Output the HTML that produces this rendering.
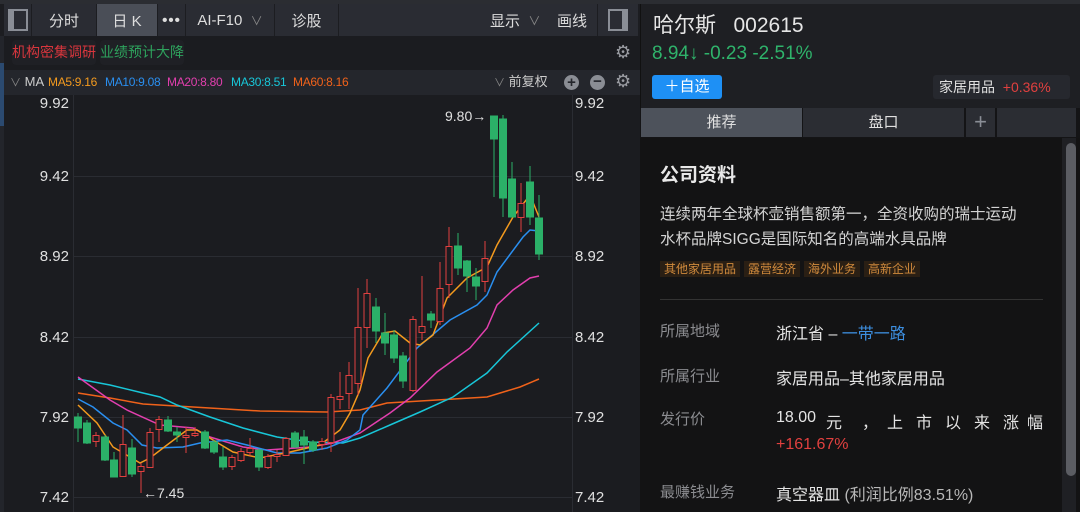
<!DOCTYPE html>
<html><head><meta charset="utf-8"><style>
*{margin:0;padding:0;box-sizing:border-box}
body{width:1080px;height:512px;background:#1b1c20;font-family:"Liberation Sans","Noto Sans CJK SC",sans-serif;overflow:hidden;position:relative;color:#ddd}
.a{position:absolute;white-space:nowrap}
.tb{position:absolute;top:4px;height:32px;background:#2a2c33;color:#ddd;font-size:15px;display:flex;align-items:center;justify-content:center}
.lbl{color:#8b8c90;font-size:15px}
.val{color:#e4e4e4;font-size:16px}
.ma{position:absolute;top:74px;font-size:12px;line-height:16px;letter-spacing:-0.3px}
</style></head><body>
<div class="a" style="left:0;top:0;width:640px;height:4px;background:#2b2d32"></div>
<div class="a" style="left:0;top:4px;width:640px;height:32px;background:#1c1d21"></div>
<div class="tb" style="left:4px;width:27px"><div style="width:20px;height:22px;border:2px solid #8a8e96;border-left-width:6px"></div></div>
<div class="tb" style="left:32px;width:64px">分时</div>
<div class="tb" style="left:97px;width:60px;background:#4a4e57">日 K</div>
<div class="tb" style="left:158px;width:27px;font-weight:bold;letter-spacing:1px">•••</div>
<div class="tb" style="left:186px;width:88px">AI-F10&nbsp;&nbsp;<span style="color:#888;font-size:12px">∨</span></div>
<div class="tb" style="left:275px;width:63px">诊股</div>
<div class="tb" style="left:339px;width:258px;justify-content:flex-end;padding-right:10px">显示&nbsp;&nbsp;<span style="color:#888;font-size:12px">∨</span>&nbsp;&nbsp;&nbsp;&nbsp;画线</div>
<div class="tb" style="left:598px;width:40px"><div style="width:20px;height:22px;border:2px solid #8a8e96;border-right-width:6px"></div></div>
<div class="a" style="left:0;top:36px;width:4px;height:476px;background:#23252b"></div>
<div class="a" style="left:0;top:63px;width:4px;height:63px;background:#2b4a70"></div>
<div class="a" style="left:12px;top:40px;width:84px;height:25px;background:#1f2025;border-radius:4px;color:#d8363d;font-size:14px;line-height:25px;text-align:center">机构密集调研</div>
<div class="a" style="left:100px;top:40px;width:84px;height:25px;background:#1f2025;border-radius:4px;color:#2ea35d;font-size:14px;line-height:25px;text-align:center">业绩预计大降</div>
<div class="a" style="left:615px;top:42px;color:#9a9ca2;font-size:18px">⚙</div>
<div class="a" style="left:4px;top:70px;width:636px;height:25px;background:#24262c"></div>
<div class="ma" style="left:10px;color:#ccc;font-size:13px;letter-spacing:0"><span style="color:#888;font-size:11px">∨</span> MA</div>
<div class="ma" style="left:48px;color:#f39a1e">MA5:9.16</div>
<div class="ma" style="left:105px;color:#2a8ff0">MA10:9.08</div>
<div class="ma" style="left:167px;color:#e23fae">MA20:8.80</div>
<div class="ma" style="left:231px;color:#18c6d8">MA30:8.51</div>
<div class="ma" style="left:293px;color:#f0621a">MA60:8.16</div>
<div class="ma" style="left:494px;color:#ccc;font-size:13px;letter-spacing:0"><span style="color:#888;font-size:11px">∨</span> 前复权</div>
<div class="a" style="left:564px;top:75px;width:15px;height:15px;border-radius:50%;background:#8a8d94;color:#24262c;font-size:15px;line-height:15px;text-align:center;font-weight:bold">+</div>
<div class="a" style="left:590px;top:75px;width:15px;height:15px;border-radius:50%;background:#8a8d94;color:#24262c;font-size:15px;line-height:14px;text-align:center;font-weight:bold">−</div>
<div class="a" style="left:615px;top:71px;color:#9a9ca2;font-size:18px">⚙</div>

<svg class="a" style="left:0;top:0" width="640" height="512" viewBox="0 0 640 512">
<g stroke="#2a2c32" stroke-width="1">
<line x1="73.5" y1="95" x2="73.5" y2="512"/><line x1="572.5" y1="95" x2="572.5" y2="512"/>
<line x1="73" y1="176.5" x2="572" y2="176.5"/><line x1="73" y1="256.5" x2="572" y2="256.5"/>
<line x1="73" y1="337.5" x2="572" y2="337.5"/><line x1="73" y1="417.5" x2="572" y2="417.5"/>
<line x1="73" y1="497.5" x2="572" y2="497.5"/>
</g>
<g font-size="15" fill="#e0e0e0" font-family="Liberation Sans">
<text x="69" y="108" text-anchor="end">9.92</text><text x="69" y="181" text-anchor="end">9.42</text>
<text x="69" y="261" text-anchor="end">8.92</text><text x="69" y="342" text-anchor="end">8.42</text>
<text x="69" y="422" text-anchor="end">7.92</text><text x="69" y="502" text-anchor="end">7.42</text>
<text x="575" y="108">9.92</text><text x="575" y="181">9.42</text>
<text x="575" y="261">8.92</text><text x="575" y="342">8.42</text>
<text x="575" y="422">7.92</text><text x="575" y="502">7.42</text>
<text x="445" y="121" font-size="14">9.80→</text>
<text x="143" y="498" font-size="14">←7.45</text>
</g>
<g fill="none" stroke-width="1.5">
<polyline stroke="#f0621a" points="78,393 110,398 143,404 193,407 260,411 327,412 360,410 387,403 437,400 487,397 520,387 539,379"/>
<polyline stroke="#18c6d8" points="78,379 110,385 143,393 160,397 177,405 210,417 243,428 277,437 310,442 343,443 360,438 390,425 420,412 453,397 487,373 507,352 539,323"/>
<polyline stroke="#e23fae" points="78,377 110,400 127,410 160,425 193,428 210,437 243,447 267,450 310,447 333,443 360,433 390,413 410,398 437,372 470,348 487,328 497,305 513,290 530,278 539,276"/>
<polyline stroke="#2a8ff0" points="78,399 93,407 113,423 127,430 142,445 157,448 183,447 200,443 227,440 247,445 277,453 300,453 327,448 347,440 360,430 363,415 387,388 417,348 450,320 477,305 487,295 497,272 523,237 530,230 539,231"/>
<polyline stroke="#f39a1e" points="78,405 97,423 113,447 140,463 150,458 167,445 187,430 197,430 213,440 233,452 260,458 290,452 320,445 340,430 350,413 360,390 368,358 383,333 395,331 410,343 420,345 433,335 447,298 467,278 487,267 497,245 513,217 530,195 539,217"/>
</g>
<g stroke-width="1">
<g stroke="#2bb068" fill="#2bb068">
<line x1="78" y1="413" x2="78" y2="442"/><rect x="74.5" y="417" width="7" height="11"/>
<line x1="87" y1="420" x2="87" y2="444"/><rect x="83.5" y="423" width="7" height="20"/>
<line x1="105" y1="435" x2="105" y2="461"/><rect x="101.5" y="437" width="7" height="23"/>
<line x1="114" y1="452" x2="114" y2="477"/><rect x="110.5" y="460" width="7" height="17"/>
<line x1="132" y1="439" x2="132" y2="477"/><rect x="128.5" y="448" width="7" height="26"/>
<line x1="168" y1="416" x2="168" y2="432"/><rect x="164.5" y="420" width="7" height="11"/>
<line x1="177" y1="427" x2="177" y2="442"/><rect x="173.5" y="432" width="7" height="3"/>
<line x1="205" y1="430" x2="205" y2="449"/><rect x="201.5" y="432" width="7" height="16"/>
<line x1="214" y1="440" x2="214" y2="454"/><rect x="210.5" y="442" width="7" height="10"/>
<line x1="223" y1="447" x2="223" y2="470"/><rect x="219.5" y="457" width="7" height="10"/>
<line x1="259" y1="449" x2="259" y2="471"/><rect x="255.5" y="450" width="7" height="17"/>
<line x1="295" y1="431" x2="295" y2="448"/><rect x="291.5" y="433" width="7" height="14"/>
<line x1="304" y1="430" x2="304" y2="464"/><rect x="300.5" y="437" width="7" height="8"/>
<line x1="313" y1="440" x2="313" y2="452"/><rect x="309.5" y="442" width="7" height="8"/>
<line x1="376" y1="298" x2="376" y2="343"/><rect x="372.5" y="307" width="7" height="24"/>
<line x1="385" y1="313" x2="385" y2="355"/><rect x="381.5" y="333" width="7" height="10"/>
<line x1="394" y1="330" x2="394" y2="363"/><rect x="390.5" y="335" width="7" height="23"/>
<line x1="403" y1="352" x2="403" y2="388"/><rect x="399.5" y="356" width="7" height="25"/>
<line x1="431" y1="311" x2="431" y2="328"/><rect x="427.5" y="314" width="7" height="6"/>
<line x1="458" y1="233" x2="458" y2="275"/><rect x="454.5" y="246" width="7" height="22"/>
<line x1="467" y1="260" x2="467" y2="292"/><rect x="463.5" y="261" width="7" height="15"/>
<line x1="476" y1="268" x2="476" y2="300"/><rect x="472.5" y="277" width="7" height="9"/>
<line x1="494" y1="116" x2="494" y2="197"/><rect x="490.5" y="116" width="7" height="23"/>
<line x1="503" y1="115" x2="503" y2="217"/><rect x="499.5" y="119" width="7" height="79"/>
<line x1="512" y1="162" x2="512" y2="217"/><rect x="508.5" y="179" width="7" height="38"/>
<line x1="530" y1="166" x2="530" y2="225"/><rect x="526.5" y="182" width="7" height="35"/>
<line x1="539" y1="195" x2="539" y2="260"/><rect x="535.5" y="218" width="7" height="36"/>
</g>
<g stroke="#e0403f" fill="#1b1c20">
<line x1="96" y1="432" x2="96" y2="447"/><rect x="93" y="435.5" width="6" height="6"/>
<line x1="123" y1="415" x2="123" y2="477"/><rect x="120" y="444.5" width="6" height="32"/>
<line x1="141" y1="463" x2="141" y2="493"/><rect x="138" y="466.5" width="6" height="5"/>
<line x1="150" y1="428" x2="150" y2="467"/><rect x="147" y="432.5" width="6" height="35"/>
<line x1="159" y1="416" x2="159" y2="442"/><rect x="156" y="419.5" width="6" height="10"/>
<line x1="186" y1="427" x2="186" y2="453"/><rect x="183" y="435.5" width="6" height="2"/>
<line x1="195" y1="427" x2="195" y2="437"/><rect x="192" y="433.5" width="6" height="2"/>
<line x1="232" y1="455" x2="232" y2="470"/><rect x="229" y="457.5" width="6" height="9"/>
<line x1="241" y1="448" x2="241" y2="462"/><rect x="238" y="451.5" width="6" height="9"/>
<line x1="250" y1="438" x2="250" y2="456"/><rect x="247" y="448.5" width="6" height="4"/>
<line x1="268" y1="454" x2="268" y2="469"/><rect x="265" y="456.5" width="6" height="11"/>
<line x1="277" y1="450" x2="277" y2="462"/><rect x="274" y="454.5" width="6" height="2"/>
<line x1="286" y1="437" x2="286" y2="456"/><rect x="283" y="438.5" width="6" height="17"/>
<line x1="322" y1="438" x2="322" y2="450"/><rect x="319" y="441.5" width="6" height="3"/>
<line x1="331" y1="394" x2="331" y2="452"/><rect x="328" y="397.5" width="6" height="45"/>
<line x1="340" y1="372" x2="340" y2="409"/><rect x="337" y="396.5" width="6" height="3"/>
<line x1="349" y1="362" x2="349" y2="409"/><rect x="346" y="375.5" width="6" height="18"/>
<line x1="358" y1="288" x2="358" y2="395"/><rect x="355" y="327.5" width="6" height="56"/>
<line x1="367" y1="279" x2="367" y2="348"/><rect x="364" y="293.5" width="6" height="34"/>
<line x1="413" y1="316" x2="413" y2="392"/><rect x="410" y="319.5" width="6" height="71"/>
<line x1="422" y1="276" x2="422" y2="340"/><rect x="419" y="326.5" width="6" height="6"/>
<line x1="440" y1="262" x2="440" y2="325"/><rect x="437" y="288.5" width="6" height="33"/>
<line x1="449" y1="227" x2="449" y2="298"/><rect x="446" y="246.5" width="6" height="38"/>
<line x1="485" y1="241" x2="485" y2="292"/><rect x="482" y="258.5" width="6" height="23"/>
<line x1="521" y1="183" x2="521" y2="232"/><rect x="518" y="203.5" width="6" height="14"/>
</g>
</g>
</svg>

<div class="a" style="left:640px;top:0;width:440px;height:108px;background:#1e1f23;border-left:1px solid #111"></div>
<div class="a" style="left:640px;top:0;width:440px;height:4px;background:#2b2d32"></div>
<div class="a" style="left:653px;top:9px;font-size:21px;color:#e6e6e6">哈尔斯&nbsp;&nbsp;&nbsp;002615</div>
<div class="a" style="left:652px;top:43px;font-size:19px;color:#2fb36b">8.94↓ -0.23 -2.51%</div>
<div class="a" style="left:652px;top:75px;width:70px;height:24px;background:#1e90f5;border-radius:3px;color:#fff;font-size:15px;line-height:24px;text-align:center">＋自选</div>
<div class="a" style="left:933px;top:75px;width:137px;height:24px;background:#26282e;border-radius:3px;font-size:14px;line-height:24px;padding-left:6px;color:#e0e0e0">家居用品&nbsp; <span style="color:#e0403f">+0.36%</span></div>
<div class="a" style="left:640px;top:108px;width:440px;height:30px;background:#141416"></div>
<div class="a" style="left:641px;top:108px;width:161px;height:29px;background:#4d525b;color:#e0e0e0;font-size:15px;line-height:29px;text-align:center">推荐</div>
<div class="a" style="left:803px;top:108px;width:161px;height:29px;background:#2b2d33;color:#e0e0e0;font-size:15px;line-height:29px;text-align:center">盘口</div>
<div class="a" style="left:966px;top:108px;width:29px;height:29px;background:#2b2d33;color:#8a8e96;font-size:22px;line-height:27px;text-align:center">+</div>
<div class="a" style="left:997px;top:108px;width:79px;height:29px;background:#2b2d33"></div>
<div class="a" style="left:640px;top:138px;width:440px;height:374px;background:#131314"></div>
<div class="a" style="left:1062px;top:138px;width:14px;height:374px;background:#1f2024"></div>
<div class="a" style="left:1066px;top:143px;width:10px;height:333px;background:#5b5d63;border-radius:5px"></div>
<div class="a" style="left:660px;top:160px;font-size:19px;font-weight:bold;color:#e8e8e8">公司资料</div>
<div class="a" style="left:660px;top:202px;font-size:15.5px;line-height:25px;color:#d4d4d4">连续两年全球杯壶销售额第一，全资收购的瑞士运动<br>水杯品牌SIGG是国际知名的高端水具品牌</div>
<div class="a" style="left:660px;top:260px;font-size:12px;line-height:18px;color:#d08a3c">
<span style="background:#2a1f14;padding:1px 4px;margin-right:4px">其他家居用品</span><span style="background:#2a1f14;padding:1px 4px;margin-right:4px">露营经济</span><span style="background:#2a1f14;padding:1px 4px;margin-right:4px">海外业务</span><span style="background:#2a1f14;padding:1px 4px">高新企业</span></div>
<div class="a" style="left:660px;top:299px;width:383px;height:1px;background:#333"></div>
<div class="a lbl" style="left:660px;top:320px">所属地域</div>
<div class="a val" style="left:776px;top:320px">浙江省 – <span style="color:#3d8fe0">一带一路</span></div>
<div class="a lbl" style="left:660px;top:365px">所属行业</div>
<div class="a val" style="left:776px;top:365px">家居用品–其他家居用品</div>
<div class="a lbl" style="left:660px;top:408px">发行价</div>
<div class="a val" style="left:776px;top:409px">18.00</div>
<div class="a val" style="left:826px;top:409px">元</div>
<div class="a val" style="left:862px;top:409px">，</div>
<div class="a val" style="left:887px;top:409px">上</div>
<div class="a val" style="left:916px;top:409px">市</div>
<div class="a val" style="left:945px;top:409px">以</div>
<div class="a val" style="left:974px;top:409px">来</div>
<div class="a val" style="left:1003px;top:409px">涨</div>
<div class="a val" style="left:1027px;top:409px">幅</div>
<div class="a val" style="left:776px;top:436px;color:#e0403f">+161.67%</div>
<div class="a lbl" style="left:660px;top:481px">最赚钱业务</div>
<div class="a val" style="left:776px;top:481px">真空器皿 <span style="color:#b8b8b8">(利润比例83.51%)</span></div>
</body></html>
